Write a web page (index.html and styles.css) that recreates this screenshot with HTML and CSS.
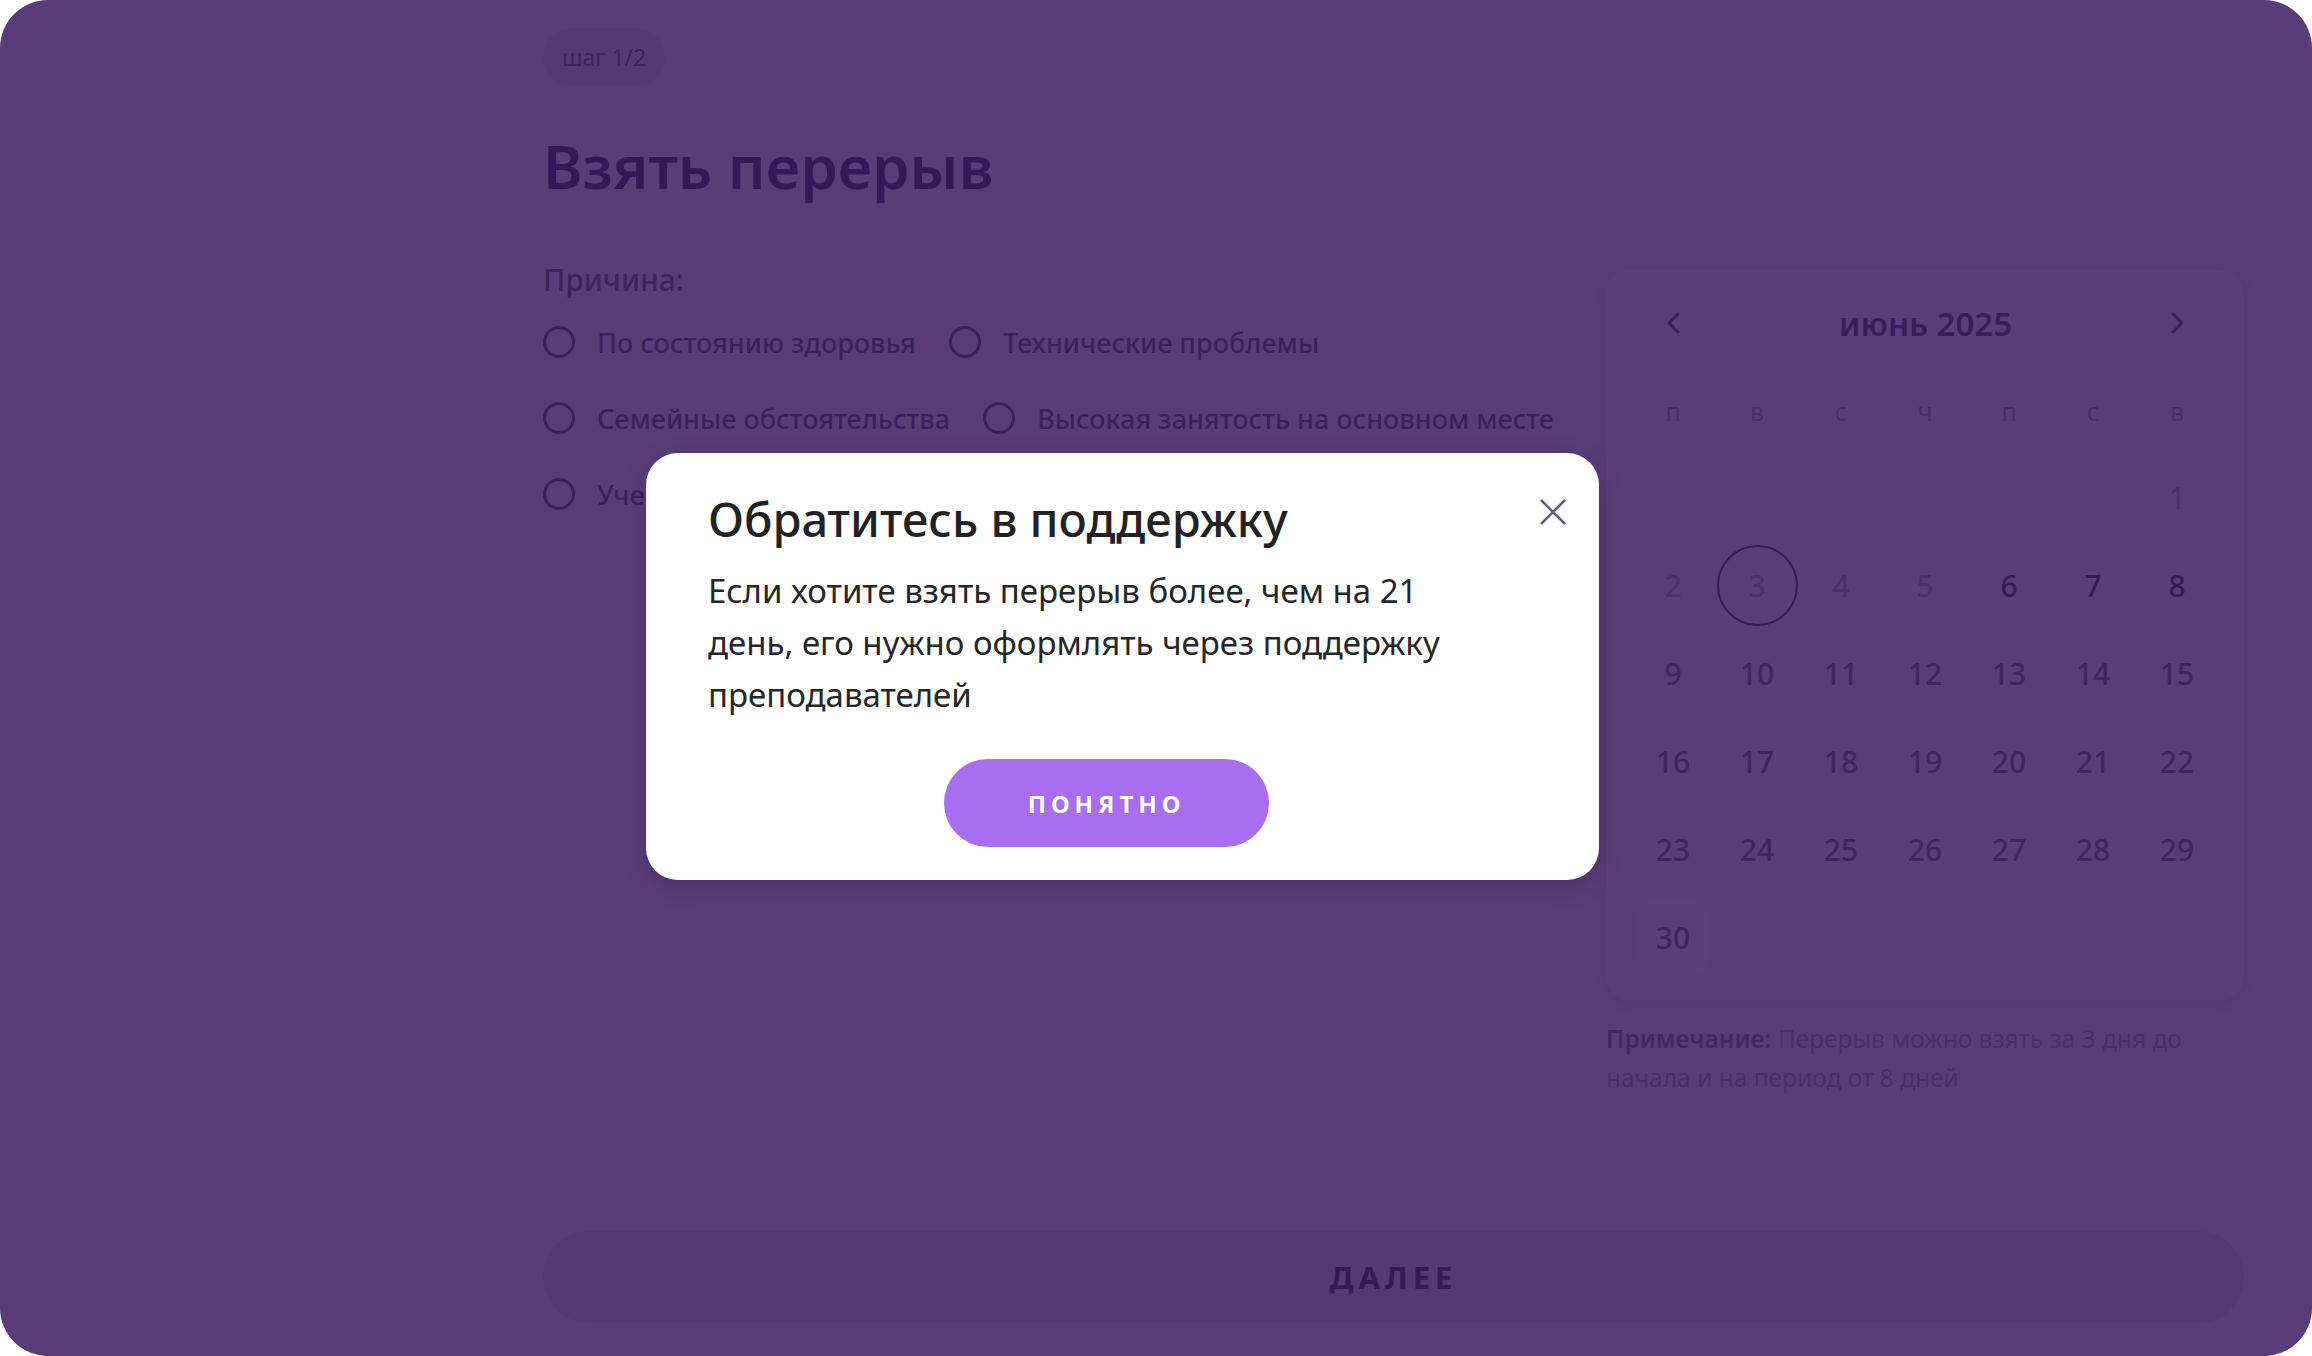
FILE: index.html
```html
<!DOCTYPE html>
<html lang="ru">
<head>
    <meta charset="UTF-8">
    <meta name="viewport" content="width=device-width, initial-scale=1.0">
    <title>Взять перерыв</title>
    <link rel="stylesheet" href="styles.css">
</head>
<body>
    <div class="page">
        <div class="content">
            <span class="step">шаг 1/2</span>
            <h1>Взять перерыв</h1>

            <div class="main">
                <div class="reason">
                    <div class="reason-title">Причина:</div>
                    <div class="radios">
                        <label class="radio"><span class="dot"></span>По состоянию здоровья</label>
                        <label class="radio"><span class="dot"></span>Технические проблемы</label>
                        <label class="radio"><span class="dot"></span>Семейные обстоятельства</label>
                        <label class="radio"><span class="dot"></span>Высокая занятость на основном месте</label>
                        <label class="radio"><span class="dot"></span>Учебная нагрузка</label>
                    </div>
                </div>

                <div class="aside">
                    <div class="calendar">
                        <div class="cal-head">
                            <svg class="chev" viewBox="0 0 16 24"><path d="M13 3 L4 12 L13 21"/></svg>
                            <span class="month">июнь 2025</span>
                            <svg class="chev" viewBox="0 0 16 24"><path d="M3 3 L12 12 L3 21"/></svg>
                        </div>
                        <div class="cal-grid">
                            <span class="wd">п</span><span class="wd">в</span><span class="wd">с</span><span class="wd">ч</span><span class="wd">п</span><span class="wd">с</span><span class="wd">в</span>

                            <span></span><span></span><span></span><span></span><span></span><span></span>
                            <span class="day off">1</span>
                            <span class="day off">2</span>
                            <span class="day off today">3</span>
                            <span class="day off">4</span>
                            <span class="day off">5</span>
                            <span class="day strong">6</span>
                            <span class="day strong">7</span>
                            <span class="day strong">8</span>
                            <span class="day">9</span><span class="day">10</span><span class="day">11</span><span class="day">12</span><span class="day">13</span><span class="day">14</span><span class="day">15</span>
                            <span class="day">16</span><span class="day">17</span><span class="day">18</span><span class="day">19</span><span class="day">20</span><span class="day">21</span><span class="day">22</span>
                            <span class="day">23</span><span class="day">24</span><span class="day">25</span><span class="day">26</span><span class="day">27</span><span class="day">28</span><span class="day">29</span>
                            <span class="day last">30</span>
                        </div>
                    </div>
                    <p class="note"><b>Примечание:</b> Перерыв можно взять за 3 дня до начала и на период от 8 дней</p>
                </div>
            </div>

            <button class="next" type="button">Далее</button>
        </div>

        <div class="modal">
            <button class="close" type="button" aria-label="Закрыть">
                <svg viewBox="0 0 28 28"><path d="M2 2 L26 26 M26 2 L2 26"/></svg>
            </button>
            <h2>Обратитесь в поддержку</h2>
            <p>Если хотите взять перерыв более, чем на 21 день, его нужно оформлять через поддержку преподавателей</p>
            <div class="modal-actions">
                <button class="ok" type="button">Понятно</button>
            </div>
        </div>
    </div>
</body>
</html>
```

FILE: styles.css
```css
html, body {
    margin: 0;
    padding: 0;
    background-color: white;
}

body {
    font-family: 'Noto Sans', 'Liberation Sans', sans-serif;
    color: #3c1e5e;
}

.page {
    position: relative;
    height: 100vh;
    border-radius: 48px;
    background-color: #5a3d78;
    overflow: hidden;
}

.content {
    display: flex;
    flex-direction: column;
    align-items: flex-start;
    width: 1701px;
    height: 100%;
    margin-left: 543px;
    padding-top: 28px;
    box-sizing: border-box;
}

.step {
    display: inline-block;
    height: 58px;
    line-height: 58px;
    padding: 0 19px;
    border-radius: 29px;
    background-color: #563975;
    font-size: 23px;
    color: #3e2160;
}

h1 {
    margin: 40px 0 0;
    font-size: 60px;
    line-height: 80px;
    font-weight: 600;
    color: #35185a;
}

.main {
    display: flex;
    gap: 37px;
    width: 100%;
    margin-top: 54px;
}

.reason {
    flex: 1;
}

.reason-title {
    font-size: 30px;
    line-height: 40px;
    font-weight: 500;
    color: #3e2160;
}

.radios {
    display: flex;
    flex-wrap: wrap;
    column-gap: 33px;
    row-gap: 36px;
    margin-top: 22px;
}

.radio {
    display: flex;
    align-items: center;
    gap: 22px;
    height: 40px;
    font-size: 27px;
    font-weight: 500;
    color: #3c1e5e;
}

.dot {
    width: 32px;
    height: 32px;
    border: 3px solid #3c1e5e;
    border-radius: 50%;
    box-sizing: border-box;
}

.aside {
    width: 638px;
}

.calendar {
    margin-top: 10px;
    padding: 24px 28px 20px 25px;
    border-radius: 24px;
    background-color: #5b3e79;
    box-shadow: 0 2px 12px rgba(60, 30, 90, 0.12);
}

.cal-head {
    display: flex;
    align-items: center;
    justify-content: space-between;
    height: 58px;
    padding: 0 30px 0 34px;
}

.chev {
    width: 16px;
    height: 24px;
    fill: none;
    stroke: #3a1c5c;
    stroke-width: 3;
    stroke-linecap: round;
    stroke-linejoin: round;
}

.month {
    font-size: 33px;
    font-weight: 600;
    color: #3a1c5c;
}

.cal-grid {
    display: grid;
    grid-template-columns: repeat(7, 84px);
    grid-template-rows: 84px;
    grid-auto-rows: 88px;
    margin-top: 17px;
}

.cal-grid > span {
    display: flex;
    align-items: center;
    justify-content: center;
}

.wd {
    font-size: 25px;
    color: #4a2c6b;
}

.day {
    font-size: 30px;
    font-weight: 500;
    color: #40235f;
}

.day.off {
    color: #4c2f6e;
}

.day.strong {
    color: #361957;
}

.day.today {
    position: relative;
}

.day.today::after {
    content: '';
    position: absolute;
    width: 77px;
    height: 77px;
    border: 2px solid #38195a;
    border-radius: 50%;
}

.day.last {
    border-radius: 16px;
    background-color: #5c3f7a;
    margin: 6px;
}

.note {
    margin: 18px 0 0;
    font-size: 24.5px;
    line-height: 39px;
    color: #4a2d6b;
}

.note b {
    font-weight: 600;
    color: #43265f;
}

.next {
    width: 100%;
    height: 92px;
    margin-top: auto;
    margin-bottom: 33px;
    border: none;
    border-radius: 46px;
    background-color: #563974;
    font-family: inherit;
    font-size: 31px;
    font-weight: 700;
    letter-spacing: 5px;
    text-transform: uppercase;
    color: #371959;
}

.modal {
    position: absolute;
    left: 646px;
    top: 453px;
    width: 953px;
    padding: 34px 94px 33px 62px;
    box-sizing: border-box;
    border-radius: 32px;
    background-color: white;
    box-shadow: 0 6px 24px rgba(30, 10, 50, 0.2);
    color: #222;
}

.modal h2 {
    margin: 0;
    font-size: 47px;
    line-height: 64px;
    font-weight: 500;
}

.modal p {
    margin: 14px 0 0;
    max-width: 760px;
    font-size: 33px;
    line-height: 52px;
    color: #262626;
}

.modal-actions {
    display: flex;
    justify-content: center;
    margin-top: 38px;
}

.ok {
    width: 325px;
    height: 88px;
    border: none;
    border-radius: 44px;
    background-color: #a76ef2;
    font-family: inherit;
    font-size: 24px;
    font-weight: 700;
    letter-spacing: 5px;
    text-transform: uppercase;
    color: white;
}

.close {
    position: absolute;
    top: 45px;
    right: 32px;
    width: 28px;
    height: 28px;
    padding: 0;
    border: none;
    background: none;
}

.close svg {
    display: block;
    width: 28px;
    height: 28px;
    fill: none;
    stroke: #5b6078;
    stroke-width: 2.5;
}
```
